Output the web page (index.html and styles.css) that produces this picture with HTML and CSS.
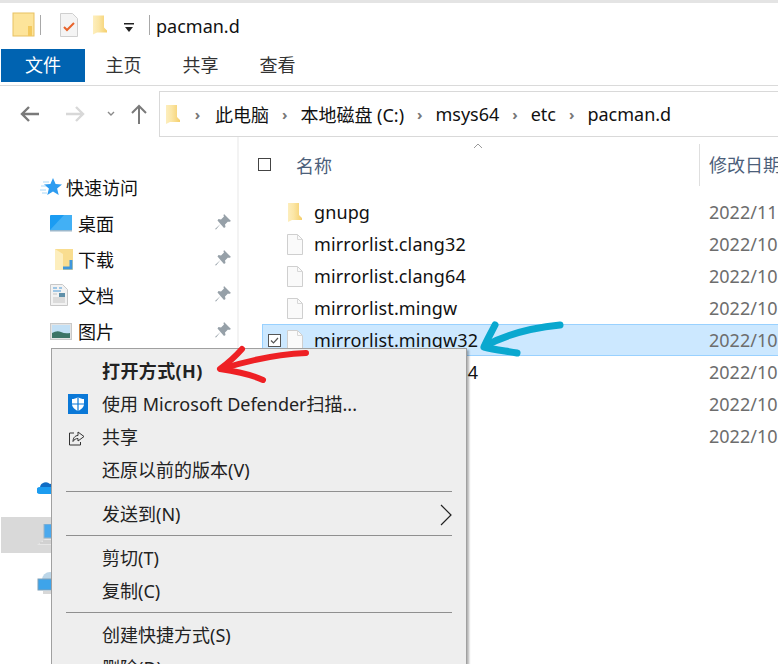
FILE: index.html
```html
<!DOCTYPE html>
<html lang="zh-CN">
<head>
    <meta charset="UTF-8">
    <meta name="viewport" content="width=device-width, initial-scale=1.0">
    <title>pacman.d</title>
    <link rel="stylesheet" href="styles.css">
</head>
<body>
    <svg class="defs" width="0" height="0">
        <defs>
            <linearGradient id="fold" x1="0" x2="1" y1="0" y2="0">
                <stop offset="0" stop-color="#fdeebd"/>
                <stop offset="0.4" stop-color="#fbe6a6"/>
                <stop offset="1" stop-color="#f5cf6c"/>
            </linearGradient>
        </defs>
        <symbol id="folder" viewBox="0 0 14 21"><path d="M0 1h11v12l3 3v2H4L0 20z" fill="url(#fold)"/></symbol>
        <symbol id="page" viewBox="0 0 16 21"><path d="M.5.500h10l5 5v15H.500z" fill="#fafafa" stroke="#cfcfcf"/><path d="M10.500.500v5h5" fill="none" stroke="#d8d8d8"/></symbol>
        <symbol id="pin" viewBox="0 0 16 16"><path d="M9 0l7 7-2 1-1-.5-3 3 .5 2.500-1.500 1L5.500 10 1 15.500 0 15l5.500-5L2.500 6.500l1-1.500 2.500.5 3-3L8.500 1.500z" fill="#96a0a8"/></symbol>
    </svg>

    <div class="window">
        <div class="titlebar">
            <svg class="t-folder" width="24" height="26" viewBox="0 0 24 26"><rect x="1" y="1" width="21" height="23" fill="#fde49a" stroke="#e8c163"/><rect x="16" y="14" width="4" height="10" fill="#f3c95e"/></svg>
            <span class="t-sep"></span>
            <svg class="t-note" width="20" height="26" viewBox="0 0 20 26"><path d="M1.5 1.5h12l5 5v18h-17z" fill="#f4f4f4" stroke="#cfcfcf"/><path d="M5 15l3 3 7-7" fill="none" stroke="#e8642c" stroke-width="2"/></svg>
            <svg class="t-yellow" width="14" height="22"><use href="#folder"/></svg>
            <svg class="t-drop" width="12" height="12" viewBox="0 0 12 12"><rect x="1" y="1" width="10" height="1.5" fill="#222"/><path d="M2 5h8l-4 5z" fill="#222"/></svg>
            <span class="t-sep last"></span>
            <span class="t-name">pacman.d</span>
        </div>

        <div class="tabs">
            <span class="tab active">文件</span>
            <span class="tab">主页</span>
            <span class="tab">共享</span>
            <span class="tab">查看</span>
        </div>

        <div class="navbar">
            <div class="nav-btns">
                <svg width="22" height="18" viewBox="0 0 22 18"><path d="M20 9H3M10 2L3 9l7 7" fill="none" stroke="#7a7a7a" stroke-width="2.4"/></svg>
                <svg class="forward" width="22" height="18" viewBox="0 0 22 18"><path d="M2 9h17M12 2l7 7-7 7" fill="none" stroke="#d8d8d8" stroke-width="2.4"/></svg>
                <svg class="recent" width="8" height="6" viewBox="0 0 8 6"><path d="M1 1l3 3 3-3" fill="none" stroke="#8a8a8a" stroke-width="1.4"/></svg>
                <svg class="up" width="16" height="20" viewBox="0 0 16 20"><path d="M8 20V2M1 9l7-7 7 7" fill="none" stroke="#7a7a7a" stroke-width="2"/></svg>
            </div>
            <div class="crumbs">
                <svg class="c-folder" width="14" height="21"><use href="#folder"/></svg>
                <span class="c-arrow first">›</span><span>此电脑</span>
                <span class="c-arrow">›</span><span>本地磁盘 (C:)</span>
                <span class="c-arrow">›</span><span>msys64</span>
                <span class="c-arrow">›</span><span>etc</span>
                <span class="c-arrow">›</span><span>pacman.d</span>
            </div>
        </div>

        <div class="main">
            <div class="sidebar">
                <div class="side-item quick">
                    <svg width="22" height="18" viewBox="0 0 22 18"><path d="M13 0l2.600 6 6.400.5-4.900 4.100 1.600 6.400L13 13.600 7.300 17l1.600-6.400L4 6.500l6.400-.5z" fill="#2d9cf0"/><path d="M3 4h6M1 8h5M0 12h6M2 15h5" stroke="#a9d8f8"/></svg>
                    <span>快速访问</span>
                </div>
                <div class="side-item">
                    <svg width="22" height="17" viewBox="0 0 22 17"><rect width="22" height="16" rx="1" fill="#1b9cf2"/><path d="M0 15L14 0h8v15z" fill="#42b0f5"/><rect y="15" width="22" height="1.500" fill="#9cb8cc"/></svg>
                    <span>桌面</span><svg class="pin" width="16" height="16"><use href="#pin"/></svg>
                </div>
                <div class="side-item">
                    <svg class="dl" width="18" height="21" viewBox="0 0 18 21"><path d="M0 0h18v21H0z" fill="#f9dd8f"/><path d="M0 0l8 5v16H0z" fill="#fdeebd"/><path d="M16 11v8H8" fill="none" stroke="#3e97dc" stroke-width="3"/></svg>
                    <span>下载</span><svg class="pin" width="16" height="16"><use href="#pin"/></svg>
                </div>
                <div class="side-item">
                    <svg class="doc" width="18" height="22" viewBox="0 0 18 22"><path d="M.5.500h12l5 5v16H.500z" fill="#f2f2f2" stroke="#c8c8c8"/><path d="M3 4h4M9 4h3M3 7h8" stroke="#4a9ad8" stroke-width="1.200"/><rect x="9" y="9" width="6" height="4" fill="#5f8fa8"/><path d="M3 10h4M3 14h12M3 16h12M3 18h12" stroke="#c4c4c4"/></svg>
                    <span>文档</span><svg class="pin" width="16" height="16"><use href="#pin"/></svg>
                </div>
                <div class="side-item">
                    <svg width="22" height="17" viewBox="0 0 22 17"><rect x=".5" y=".5" width="21" height="16" fill="#e4e4e4" stroke="#c9c9c9"/><rect x="2" y="2" width="18" height="13" fill="#c3e0f5"/><path d="M2 10q5-3 9-1t9 1v5H2z" fill="#3d7466"/></svg>
                    <span>图片</span><svg class="pin" width="16" height="16"><use href="#pin"/></svg>
                </div>
                <div class="side-item onedrive">
                    <svg width="22" height="16" viewBox="0 0 22 16"><path d="M3 9a6 6 0 0 1 10-3 5 5 0 0 1 7 5H3z" fill="#0f6cc4"/><path d="M3 16a3.500 3.500 0 0 1 0-7h17v7z" fill="#1c9cf0"/></svg>
                </div>
                <div class="side-item selected">
                    <svg width="22" height="22" viewBox="0 0 22 22"><rect x="7" y="0" width="14" height="14" fill="#4aa9ee" stroke="#9bb4c6"/><path d="M0 21l8-6h14v6z" fill="#e6e6e6"/><path d="M3 19h18M6 17h15" stroke="#bcbcbc"/></svg>
                </div>
                <div class="side-item network">
                    <svg width="22" height="24" viewBox="0 0 22 24"><circle cx="13" cy="9" r="8" fill="#bcd6e8"/><rect x="1" y="8" width="16" height="11" fill="#3ea4ea" stroke="#7fa0b8"/><rect x="6" y="20" width="10" height="3" fill="#d8d8d8"/></svg>
                </div>
            </div>

            <div class="files">
                <div class="file-head">
                    <span class="head-check"></span>
                    <span class="head-name">名称</span>
                    <svg class="sort" width="10" height="6" viewBox="0 0 10 6"><path d="M1 5l4-4 4 4" fill="none" stroke="#9a9a9a"/></svg>
                    <span class="head-date">修改日期</span>
                </div>
                <div class="file-row">
                    <svg class="f-icon" width="16" height="21"><use href="#folder"/></svg>
                    <span class="f-name">gnupg</span><span class="f-date">2022/11</span>
                </div>
                <div class="file-row">
                    <svg class="f-icon" width="16" height="21"><use href="#page"/></svg>
                    <span class="f-name">mirrorlist.clang32</span><span class="f-date">2022/10</span>
                </div>
                <div class="file-row">
                    <svg class="f-icon" width="16" height="21"><use href="#page"/></svg>
                    <span class="f-name">mirrorlist.clang64</span><span class="f-date">2022/10</span>
                </div>
                <div class="file-row">
                    <svg class="f-icon" width="16" height="21"><use href="#page"/></svg>
                    <span class="f-name">mirrorlist.mingw</span><span class="f-date">2022/10</span>
                </div>
                <div class="file-row picked">
                    <svg class="row-check" width="13" height="13" viewBox="0 0 13 13"><rect x=".5" y=".5" width="12" height="12" fill="#fff" stroke="#555"/><path d="M3 6.500l2.500 2.500L10 4" fill="none" stroke="#555" stroke-width="1.200"/></svg>
                    <svg class="f-icon" width="16" height="21"><use href="#page"/></svg>
                    <span class="f-name">mirrorlist.mingw32</span><span class="f-date">2022/10</span>
                </div>
                <div class="file-row">
                    <svg class="f-icon" width="16" height="21"><use href="#page"/></svg>
                    <span class="f-name">mirrorlist.mingw64</span><span class="f-date">2022/10</span>
                </div>
                <div class="file-row">
                    <span class="f-date">2022/10</span>
                </div>
                <div class="file-row">
                    <span class="f-date">2022/10</span>
                </div>
            </div>
        </div>

        <div class="menu">
            <div class="menu-item bold">打开方式(H)</div>
            <div class="menu-item">
                <svg class="m-icon" width="20" height="20" viewBox="0 0 20 20"><rect width="20" height="20" fill="#0a78d7"/><path d="M10 3c2 1.500 4 2 6 2v5c0 3.500-3 5.500-6 7-3-1.500-6-3.500-6-7V5c2 0 4-.5 6-2z" fill="#fff"/><path d="M10 3v14M4 10h12" stroke="#0a78d7" stroke-width="1.200"/></svg>
                使用 Microsoft Defender扫描...
            </div>
            <div class="menu-item">
                <svg class="m-icon share" width="16" height="15" viewBox="0 0 16 15"><path d="M5 2H.500v12h11v-3" fill="none" stroke="#333"/><path d="M9 1l6 4.500L9 10V7.500c-2 0-4 1-5 3 0-3.500 2-6 5-6z" fill="none" stroke="#333"/></svg>
                共享
            </div>
            <div class="menu-item">还原以前的版本(V)</div>
            <div class="menu-sep"></div>
            <div class="menu-item">发送到(N)
                <svg class="m-more" width="13" height="22" viewBox="0 0 13 22"><path d="M1 1l10 10L1 21" fill="none" stroke="#222" stroke-width="1.200"/></svg>
            </div>
            <div class="menu-sep"></div>
            <div class="menu-item">剪切(T)</div>
            <div class="menu-item">复制(C)</div>
            <div class="menu-sep"></div>
            <div class="menu-item">创建快捷方式(S)</div>
            <div class="menu-item">删除(D)</div>
        </div>

        <svg class="marks" width="778" height="664" viewBox="0 0 778 664">
            <g fill="none" stroke-linecap="round" stroke-linejoin="round">
                <path d="M306 353C280 354 250 360 221 369" stroke="#ee2024" stroke-width="6"/>
                <path d="M242 349C235 357 228 363 220 369C234 371 250 374 263 380" stroke="#ee2024" stroke-width="6"/>
                <path d="M560 325C530 328 505 335 485 346" stroke="#0aa8cf" stroke-width="7"/>
                <path d="M495 325C491 333 487 340 484 347C495 350 507 351 517 353" stroke="#0aa8cf" stroke-width="7"/>
            </g>
        </svg>
    </div>
</body>
</html>
```

FILE: styles.css
```css
html, body {
    margin: 0;
    padding: 0;
}
body {
    width: 778px;
    height: 664px;
    overflow: hidden;
    background-color: #fff;
    font-family: "Noto Sans", "Noto Sans CJK SC", sans-serif;
    font-size: 18px;
    color: #111;
}
.defs {
    display: block;
    height: 0;
}
.window {
    position: relative;
    width: 778px;
    height: 664px;
    overflow: hidden;
    display: flex;
    flex-direction: column;
}

/* title bar */
.titlebar {
    height: 46px;
    box-sizing: border-box;
    border-top: 3px solid #e4e4e4;
    display: flex;
    align-items: center;
    padding: 1px 0 0 12px;
    flex-shrink: 0;
}
.t-sep {
    width: 1px;
    height: 20px;
    background-color: #a8a8a8;
    margin: 0 18px 0 4px;
}
.t-sep.last {
    margin: 0 6px 0 14px;
}
.t-yellow {
    margin-left: 14px;
}
.t-drop {
    margin-left: 16px;
    margin-top: 6px;
}
.t-name {
    font-size: 18px;
    margin-top: 2px;
}

/* ribbon tabs */
.tabs {
    height: 40px;
    box-sizing: border-box;
    border-bottom: 1px solid #dadada;
    padding: 3px 0 3px 1px;
    display: flex;
    flex-shrink: 0;
}
.tab {
    width: 77px;
    text-align: center;
    line-height: 33px;
    font-size: 18px;
    color: #333;
}
.tab.active {
    width: 84px;
    background-color: #0063b1;
    color: #fff;
}

/* address row */
.navbar {
    height: 51px;
    box-sizing: border-box;
    padding-top: 5px;
    display: flex;
    flex-shrink: 0;
}
.nav-btns {
    width: 159px;
    display: flex;
    align-items: center;
    padding-left: 19px;
    box-sizing: border-box;
}
.forward {
    margin-left: 23px;
}
.recent {
    margin-left: 21px;
}
.up {
    margin-left: 16px;
}
.crumbs {
    flex: 1;
    border: 1px solid #d9d9d9;
    border-right: 0;
    display: flex;
    align-items: center;
    padding-left: 6px;
}
.c-arrow {
    color: #777;
    width: 31.4px;
    text-align: center;
    font-weight: bold;
    font-size: 15px;
}
.c-arrow.first {
    width: 35px;
}

/* main area */
.main {
    flex: 1;
    display: flex;
    min-height: 0;
}
.sidebar {
    width: 239px;
    box-sizing: border-box;
    border-right: 2px solid #f3f3f3;
    padding-top: 32px;
    flex-shrink: 0;
}
.side-item {
    height: 36px;
    display: flex;
    align-items: center;
    padding-left: 50px;
    font-size: 18px;
}
.side-item > span {
    margin-left: 6px;
}
.side-item.quick {
    padding-left: 40px;
}
.side-item.quick > span {
    margin-left: 4px;
}
.dl {
    margin-left: 5px;
    margin-right: -1px;
}
.doc {
    margin-right: 4px;
}
.pin {
    margin-left: auto;
    margin-right: 6px;
    margin-bottom: 2px;
}
.onedrive {
    padding-left: 37px;
    margin-top: 119px;
}
.selected {
    padding-left: 36px;
    margin: 13px 0 0 1px;
    background-color: #d9d9d9;
}
.network {
    padding-left: 37px;
    margin-top: 12px;
}

/* file list */
.files {
    flex: 1;
    min-width: 0;
}
.file-head {
    height: 59px;
    position: relative;
    display: flex;
    align-items: center;
    color: #4c607a;
    padding-bottom: 4px;
    box-sizing: border-box;
}
.head-check {
    width: 11px;
    height: 11px;
    border: 1px solid #444;
    margin-left: 19px;
}
.head-name {
    margin-left: 25px;
}
.sort {
    position: absolute;
    left: 234px;
    top: 6px;
}
.head-date {
    margin-left: auto;
    border-left: 1px solid #dfdfdf;
    width: 69px;
    padding-left: 9px;
    height: 42px;
    line-height: 42px;
    white-space: nowrap;
    overflow: hidden;
}
.file-row {
    height: 32px;
    box-sizing: border-box;
    margin-left: 23px;
    display: flex;
    align-items: center;
    position: relative;
    padding-left: 25px;
}
.file-row.picked {
    background-color: #cce8ff;
    border: 1px solid #99d1ff;
    border-right: 0;
    padding-left: 24px;
}
.row-check {
    position: absolute;
    left: 5px;
    top: 9px;
}
.f-icon {
    flex-shrink: 0;
}
.f-name {
    margin-left: 11px;
    letter-spacing: 0.12px;
}
.f-date {
    position: absolute;
    left: 447px;
    color: #6d6d6d;
    white-space: nowrap;
}
.picked .f-date {
    left: 446px;
}

/* context menu */
.menu {
    position: absolute;
    left: 51px;
    top: 348px;
    width: 416px;
    height: 340px;
    box-sizing: border-box;
    padding-top: 6px;
    background-color: #eeeeee;
    border: 1px solid #a0a0a0;
    box-shadow: 2px 2px 2px rgba(0, 0, 0, 0.3);
    color: #222;
}
.menu-item {
    height: 33px;
    line-height: 33px;
    padding-left: 50px;
    position: relative;
    white-space: nowrap;
}
.menu-item.bold {
    font-weight: bold;
    letter-spacing: 0.4px;
}
.m-icon {
    position: absolute;
    left: 16px;
    top: 6px;
}
.m-icon.share {
    left: 17px;
    top: 10px;
}
.m-more {
    position: absolute;
    right: 13px;
    top: 6px;
}
.menu-sep {
    height: 1px;
    background-color: #8f8f8f;
    margin: 4px 14px 6px;
}

/* hand drawn arrows on top */
.marks {
    position: absolute;
    left: 0;
    top: 0;
}
```
